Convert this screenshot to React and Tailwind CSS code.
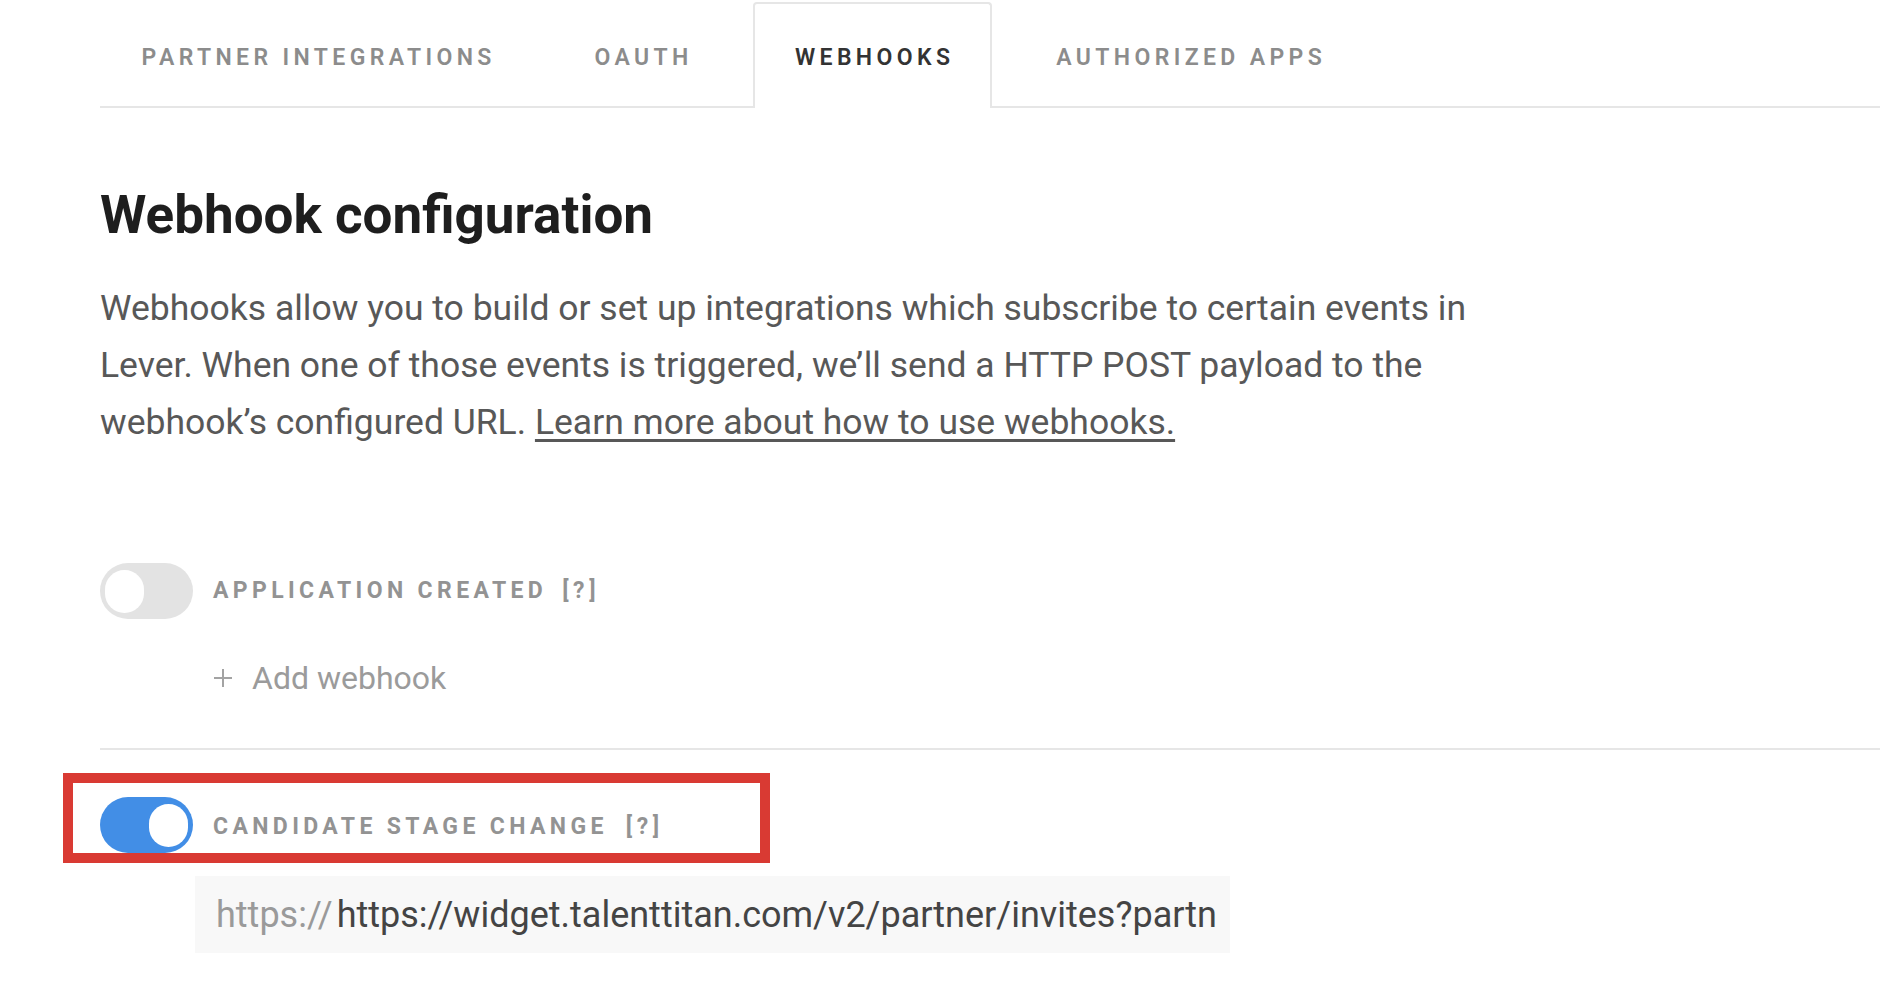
import React, { useState } from "react";

const tabs = [
  { label: "PARTNER INTEGRATIONS", w: "w-[433px]", ml: "" },
  { label: "OAUTH", w: "w-[175px]", ml: "ml-[21px]" },
  { label: "WEBHOOKS", w: "w-[239px]", ml: "ml-[24px]" },
  { label: "AUTHORIZED APPS", w: "w-[350px]", ml: "ml-[22px]" },
];

const Toggle = ({ on, onClick }) => (
  <button
    onClick={onClick}
    className={`w-[93px] h-[56px] rounded-full flex items-center px-[5px] shrink-0 ${on ? "bg-[#428ee6] justify-end" : "bg-[#e3e3e3] justify-start"}`}
  >
    <span className="block w-[39px] h-[43px] rounded-full bg-white"></span>
  </button>
);

const Webhooks = () => {
  // state
  const [tab, setTab] = useState("WEBHOOKS");
  const [appCreated, setAppCreated] = useState(false);
  const [stageChange, setStageChange] = useState(true);

  return (
    <div className="w-full h-[986px] overflow-hidden bg-white font-['Liberation_Sans_Narrow',Roboto,sans-serif]">
      <div className="pl-[100px] pr-[22px]">
        {/* tabs */}
        <div className="flex items-end h-[108px] border-b-2 border-[#e6e6e6]">
          {tabs.map((t) => (
            <div
              key={t.label}
              onClick={() => setTab(t.label)}
              className={`${t.w} ${t.ml} -mb-[2px] flex items-center justify-center cursor-pointer text-[23px] tracking-[0.19em] font-semibold ${tab == t.label ? "h-[106px] bg-white border-2 border-b-0 border-[#e6e6e6] rounded-t-[4px] text-[#333333]" : "h-[104px] text-[#8c8c8c]"}`}
            >
              <span className="mt-[4px] pl-[0.19em]">{t.label}</span>
            </div>
          ))}
        </div>

        {/* heading */}
        <h1 className="mt-[72px] text-[53px] leading-[70px] font-bold text-[#1e1e1e]">
          Webhook configuration
        </h1>
        <p className="mt-[30px] w-[1380px] text-[35.5px] leading-[57px] text-[#585858]">
          Webhooks allow you to build or set up integrations which subscribe to
          certain events in Lever. When one of those events is triggered, we’ll
          send a HTTP POST payload to the webhook’s configured URL.{" "}
          <a href="#" className="underline underline-offset-[5px]">
            Learn more about how to use webhooks.
          </a>
        </p>

        {/* application created */}
        <div className="mt-[112px] flex items-center gap-[20px]">
          <Toggle on={appCreated} onClick={() => setAppCreated(!appCreated)} />
          <span className="text-[23px] tracking-[0.19em] font-bold text-[#939393]">
            APPLICATION CREATED
            <span className="ml-[15px] tracking-[0.2em]">[?]</span>
          </span>
        </div>
        <div className="mt-[37px] pl-[113px] h-[44px] flex items-center text-[#9b9b9b]">
          <svg width="20" height="20" viewBox="0 0 20 20" className="shrink-0">
            <path d="M10 1v18M1 10h18" stroke="#a3a3a3" strokeWidth="2" />
          </svg>
          <span className="ml-[19px] text-[32px] leading-[44px]">Add webhook</span>
        </div>
        <div className="mt-[48px] border-b-2 border-[#e6e6e6]"></div>

        {/* candidate stage change */}
        <div className="mt-[23px] -ml-[37px] w-[707px] h-[90px] border-[10px] border-[#d93a33] flex items-start gap-[20px] pl-[27px] pt-[14px]">
          <Toggle on={stageChange} onClick={() => setStageChange(!stageChange)} />
          <span className="mt-[13px] text-[23px] tracking-[0.19em] font-bold text-[#939393]">
            CANDIDATE STAGE CHANGE
            <span className="ml-[18px] tracking-[0.2em]">[?]</span>
          </span>
        </div>
        <div className="mt-[13px] ml-[95px] w-[1035px] h-[77px] bg-[#f8f8f8] flex items-center pl-[21px] overflow-hidden whitespace-nowrap text-[36px]">
          <span className="text-[#9a9a9a]">https://</span>
          <span className="ml-[4px] text-[#444444]">
            https://widget.talenttitan.com/v2/partner/invites?partn
          </span>
        </div>
      </div>
    </div>
  );
};

export default function App() {
  return <Webhooks />;
}
